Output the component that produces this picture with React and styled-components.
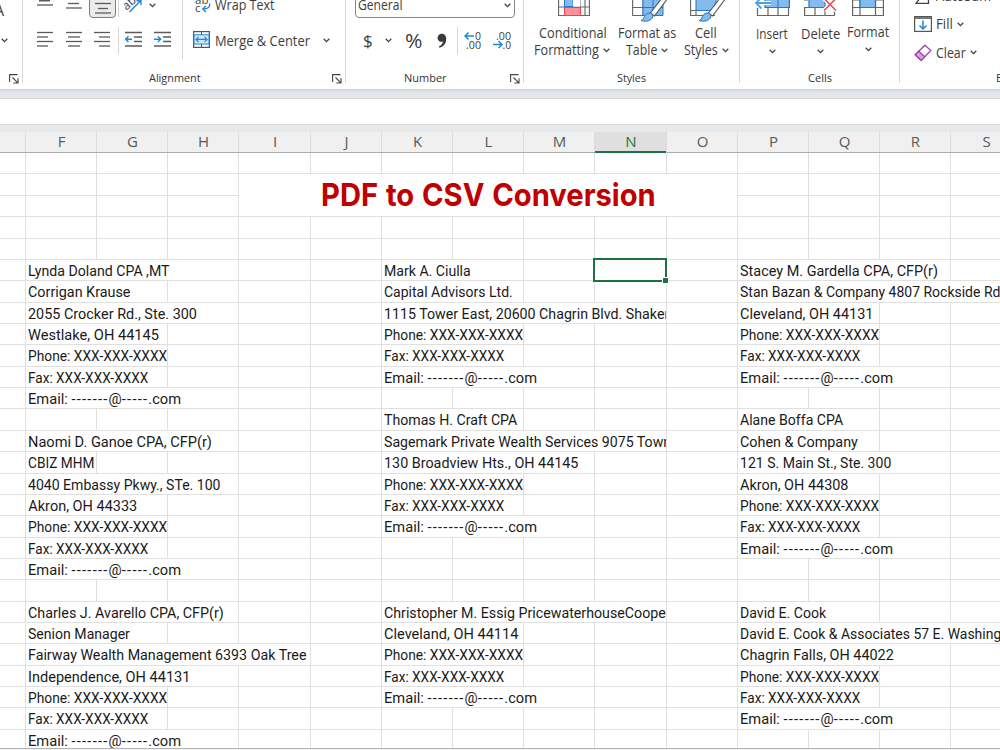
import React, { useLayoutEffect, useRef, useState } from "react";
import styled, { createGlobalStyle } from "styled-components";

const UI = `"Open Sans", "Noto Sans", sans-serif`;
const SHEET = `Roboto, "Liberation Sans", sans-serif`;
const GREEN = "#1e7145";
const LINE = "#e0e0e0";

const Global = createGlobalStyle`
  * { box-sizing: border-box; }
  body { margin: 0; background: #fff; overflow: hidden; }
  svg { display: block; flex: none; }
`;

/* ---------- text of a known width ---------- */

const FitBox = styled.span`
  display: block;
  flex: none;
  width: ${(p) => p.$w}px;
  margin-left: ${(p) => p.$ml || 0}px;
  white-space: pre;
`;
const FitInner = styled.span`
  display: inline-block;
  transform-origin: 0 50%;
`;

function Fit({ w, ml, children }) {
  const ref = useRef(null);
  const [scale, setScale] = useState(1);
  useLayoutEffect(() => {
    setScale(w / ref.current.offsetWidth);
  }, [w]);
  return (
    <FitBox $w={w} $ml={ml}>
      <FitInner ref={ref} style={{ transform: `scaleX(${scale})` }}>
        {children}
      </FitInner>
    </FitBox>
  );
}

/* ---------- ribbon parts ---------- */

const Window = styled.div`
  width: 1000px;
  height: 750px;
  overflow: hidden;
  display: flex;
  flex-direction: column;
  background: #f3f3f3;
`;
const Ribbon = styled.div`
  flex: none;
  height: 89px;
  display: flex;
  overflow: hidden;
  background: #fff;
  font: 14px/18px ${UI};
  color: #3d3d3d;
`;
const Group = styled.div`
  flex: none;
  width: ${(p) => p.$w}px;
  height: 83px;
  display: flex;
  flex-direction: column;
  border-right: ${(p) => (p.$last ? "none" : "1px solid #d8d8d8")};
`;
const Body = styled.div`
  height: 69px;
  flex: none;
  display: flex;
`;
const Stack = styled.div`
  flex: none;
  width: ${(p) => p.$w}px;
`;
const ToolRow = styled.div`
  height: ${(p) => p.$h}px;
  margin-top: ${(p) => p.$mt || 0}px;
  display: flex;
  align-items: ${(p) => p.$align || "center"};
`;
const Footer = styled.div`
  height: 18px;
  flex: none;
  display: flex;
  font-size: 11.5px;
  line-height: 18px;
  color: #333;
`;
const Slot = styled.div`
  flex: none;
  margin-left: ${(p) => p.$ml || 0}px;
  margin-top: ${(p) => p.$mt || 0}px;
`;
const Divider = styled.div`
  flex: none;
  width: 1px;
  height: ${(p) => p.$h}px;
  margin-left: ${(p) => p.$ml || 0}px;
  background: #d4d4d4;
`;
const ActiveTool = styled.div`
  flex: none;
  width: 27px;
  height: 22px;
  margin: -4px 0 0 7px;
  padding: 4px 0 0 5px;
  border: 1px solid #7d7d7d;
  border-radius: 4px;
  background: #ebebeb;
`;
const FormatBox = styled.div`
  width: 160px;
  height: 24px;
  margin: -6px 0 0 9px;
  padding: 0 3px 2px 2px;
  border: 1px solid #868686;
  border-radius: 4px;
  display: flex;
  align-items: center;
  justify-content: space-between;
`;
const Glyph = styled.div`
  flex: none;
  width: ${(p) => p.$w}px;
  margin-left: ${(p) => p.$ml}px;
  font: ${(p) => p.$size}px/24px ${UI};
`;
const BigButton = styled.div`
  flex: none;
  width: ${(p) => p.$w}px;
  display: flex;
  flex-direction: column;
  align-items: center;
`;
const BigIcon = styled.div`
  height: 17px;
  margin-bottom: ${(p) => p.$gap}px;
`;
const Caption = styled.div`
  display: flex;
  align-items: center;
  gap: 4px;
  height: 17.5px;
`;

/* ---------- icons ---------- */

const Chevron = () => (
  <svg width="7" height="5" viewBox="0 0 7 5">
    <path d="M.7 .8 3.5 3.6 6.3 .8" fill="none" stroke="#444" strokeWidth="1.3" />
  </svg>
);
const Launcher = () => (
  <svg width="10" height="10" viewBox="0 0 10 10" fill="none" stroke="#444">
    <path d="M.6 8V.6H8.5M3.5 3.5 8.6 8.6M9 4.3V9H4.3" strokeWidth="1.1" />
  </svg>
);
const Lines = ({ rows, h = 17 }) => (
  <svg width="16" height={h} viewBox={`0 0 16 ${h}`} stroke="#5b5b5b" strokeWidth="1.2">
    {rows.map(([x1, x2, y, w], i) => (
      <path key={i} d={`M${x1} ${y}H${x2}`} strokeWidth={w || 1.3} />
    ))}
  </svg>
);
const Indent = ({ right }) => (
  <svg width="17" height="17" viewBox="0 0 17 17" fill="none">
    <path d="M0 1.5H17M9 6H17M9 10.500H17M0 15H17" stroke="#5b5b5b" strokeWidth="1.3" />
    <path
      d={right ? "M0 8.200H6.500M3.800 5.300 6.700 8.200 3.800 11.100" : "M7 8.200H.8M3.500 5.300 .6 8.200 3.500 11.100"}
      stroke="#1e88d2"
      strokeWidth="1.4"
    />
  </svg>
);
const Orientation = () => (
  <svg width="19" height="13" viewBox="0 0 19 13" fill="none">
    <text x="0" y="8" fontSize="12" fontFamily="Open Sans" fill="#444" transform="rotate(-42 5 6)">ab</text>
    <path d="M5.500 12 16.500 .8M12.500 .8H17V5" stroke="#1e88d2" strokeWidth="1.4" />
  </svg>
);
const WrapIcon = () => (
  <svg width="17" height="14" viewBox="0 0 17 14" fill="none">
    <text x="0" y="3.500" fontSize="11.500" fontFamily="Open Sans" fill="#444">ab</text>
    <text x="0" y="12" fontSize="11.500" fontFamily="Open Sans" fill="#444">c</text>
    <path d="M14.500 3.500C15.500 7 13 9 8 9M10.800 6 7.800 9 10.800 12" stroke="#1e88d2" strokeWidth="1.4" />
  </svg>
);
const MergeIcon = () => (
  <svg width="17" height="17" viewBox="0 0 17 17" fill="none">
    <rect x=".6" y=".6" width="15.800" height="15.800" fill="#fff" stroke="#555" strokeWidth="1.2" />
    <path d="M8.500 0V4M8.500 13V17" stroke="#555" />
    <rect x="1" y="3.800" width="15" height="9.200" fill="#cfe6f7" stroke="#1e88d2" />
    <path d="M3 8.400H14M5.500 5.900 3 8.400 5.500 10.900M11.500 5.900 14 8.400 11.500 10.900" stroke="#1e88d2" strokeWidth="1.3" />
  </svg>
);
const CommaIcon = () => (
  <svg width="10" height="16" viewBox="0 0 10 16">
    <path d="M4.700.8C7.600.8 9.200 3 9.200 6 9.200 10.400 6.600 13.600 2.500 14.800L1.900 13.400C4.400 12.300 5.700 10.700 6 8.600 2.900 9.500.6 7.600.6 4.900.6 2.500 2.300.8 4.700.8Z" fill="#3a3a3a" />
  </svg>
);
const Decimals = ({ increase }) => (
  <svg width="18" height="19" viewBox="0 0 18 19" fill="none">
    <g fontFamily="Open Sans" fontSize="11" fill="#3d3d3d">
      <text x={increase ? 11 : 3} y="8.500" textLength={increase ? 6 : 15} lengthAdjust="spacingAndGlyphs">{increase ? "0" : ".00"}</text>
      <text x={increase ? 2 : 9.500} y="17.500" textLength={increase ? 15 : 8.500} lengthAdjust="spacingAndGlyphs">{increase ? ".00" : ".0"}</text>
    </g>
    <path
      d={increase ? "M10 5H1M4.500 1.500 1 5 4.500 8.500" : "M0 13.500H9M5.500 10 9 13.500 5.500 17"}
      stroke="#1e88d2"
      strokeWidth="1.5"
    />
  </svg>
);
const ConditionalIcon = () => (
  <svg width="32" height="17" viewBox="0 0 32 17" fill="none">
    <path d="M.6 0V15.500H31.400V0M0 7H32M6.500 0V15.500M22.500 0V15.500M27 0V15.500" stroke="#666" strokeWidth="1.1" />
    <rect x="6.500" y="-2" width="8.500" height="8.500" fill="#83bbee" stroke="#2b7cd3" />
    <rect x="15" y="-2" width="7.500" height="8.500" fill="#fff" />
    <rect x="6.500" y="7.500" width="16" height="8" fill="#ff9298" stroke="#e8474c" />
  </svg>
);
const Brush = ({ x }) => (
  <g transform={`translate(${x} 0)`}>
    <path d="M9.500 13 21-2H27L13.500 16Z" fill="#fff" stroke="#555" strokeWidth="1.1" />
    <path d="M0 20.500C4 19.500 2.500 13.500 8 13 11 12.800 13 15.500 11.300 18 9 21.500 3.500 21.800 0 20.500Z" fill="#83bbee" stroke="#2478c4" />
  </g>
);
const TableBrushIcon = () => (
  <svg width="36" height="22" viewBox="0 0 36 22" fill="none">
    <path d="M.6 0V15.500H12M0 7.500H11M11 0V15.500" stroke="#666" strokeWidth="1.1" />
    <path d="M11-1H31V15.500H11Z" fill="#83bbee" stroke="#2478c4" />
    <path d="M11 7.500H31M21 0V15" stroke="#2478c4" />
    <Brush x={9} />
  </svg>
);
const CellBrushIcon = () => (
  <svg width="36" height="22" viewBox="0 0 36 22" fill="none">
    <path d="M.6 0V15.500H25M6 10V15.500M0 10.500H6" stroke="#666" strokeWidth="1.1" />
    <rect x="6" y="-2" width="20" height="12.500" fill="#83bbee" stroke="#2478c4" />
    <Brush x={9} />
  </svg>
);
const InsertIcon = () => (
  <svg width="35" height="17" viewBox="0 0 35 17" fill="none">
    <path d="M2.500 8V15.500H33.500V8M13 8V15.500M23 8V15.500" stroke="#666" strokeWidth="1.200" />
    <path d="M10-1H34.400V7.500H10Z" fill="#83bbee" stroke="#2478c4" strokeWidth="1.200" />
    <path d="M23 0V7" stroke="#2478c4" />
    <path d="M16 3H1" stroke="#fff" strokeWidth="4" />
    <path d="M16 3H1M6.500-2.500 1 3 6.500 8.500" stroke="#4aa3e0" strokeWidth="1.800" />
  </svg>
);
const DeleteIcon = () => (
  <svg width="33" height="17" viewBox="0 0 33 17" fill="none">
    <path d="M.6 7.500V15.500H30.500V11M0 7.500H6M11 8V15.500M21 8V15.500M0 0H4" stroke="#666" strokeWidth="1.200" />
    <path d="M5-1H21V7.500H5Z" fill="#83bbee" stroke="#2478c4" strokeWidth="1.200" />
    <path d="M20-1.500 32 10.500M32-1.500 20 10.500" stroke="#fff" strokeWidth="4" />
    <path d="M20-1.500 32 10.500M32-1.500 20 10.500" stroke="#f0484c" strokeWidth="1.600" />
  </svg>
);
const FormatIcon = () => (
  <svg width="32" height="17" viewBox="0 0 32 17" fill="none">
    <path d="M.6 0V15.500H31.400V0M0 7.500H32M8 0V15.500M23.500 0V15.500M0 0H32" stroke="#666" strokeWidth="1.200" />
    <path d="M8-1H23.500V7.500H8Z" fill="#83bbee" stroke="#2478c4" strokeWidth="1.200" />
  </svg>
);
const FillIcon = () => (
  <svg width="18" height="16" viewBox="0 0 18 16" fill="none">
    <rect x=".6" y=".6" width="16.800" height="14.800" fill="#fff" stroke="#555" strokeWidth="1.200" />
    <path d="M1 2H17" stroke="#777" strokeWidth="2" />
    <path d="M9 4.500V13M5.500 9.500 9 13 12.500 9.500" stroke="#1e88d2" strokeWidth="1.500" />
  </svg>
);
const EraserIcon = () => (
  <svg width="18" height="18" viewBox="0 0 18 18" fill="none" stroke="#a03aa8" strokeWidth="1.200">
    <path d="M11 1.200 16.800 6.500 7.200 16.500 1.200 10.800Z" fill="#fff" />
    <path d="M4.800 7.200 10.800 12.800 7.200 16.500 1.200 10.800Z" fill="#d9a0dd" />
  </svg>
);
const SigmaIcon = () => (
  <svg width="15" height="5" viewBox="0 0 15 5" fill="none">
    <path d="M6-3 1 3.300H13.500V0" stroke="#444" strokeWidth="1.300" />
  </svg>
);

/* ---------- sheet parts ---------- */

const Band = styled.div`
  flex: none;
  height: ${(p) => p.$h}px;
  background: ${(p) => p.$bg};
  border-bottom: ${(p) => (p.$line ? `1px solid ${p.$line}` : "none")};
`;
const COLS = [26, 71, 71, 71, 72, 71, 71, 71, 71, 72, 71, 71, 71, 71, 71];
const rowEdge = (k) => Math.floor(152.6 + 21.36 * k);
const ROWS = Array.from({ length: 28 }, (_, k) => rowEdge(k + 1) - rowEdge(k));

const Headings = styled.div`
  flex: none;
  height: 21px;
  display: grid;
  grid-template-columns: ${COLS.map((c) => c + "px").join(" ")};
  border-bottom: 1px solid #ababab;
  background: #f0f0f0;
  font: 15px/19px ${UI};
`;
const Heading = styled.div`
  height: ${(p) => (p.$on ? 21 : 20)}px;
  padding-left: 1px;
  text-align: center;
  color: ${(p) => (p.$on ? GREEN : "#595959")};
  background: ${(p) => (p.$on ? "#dfdfdf" : "transparent")};
  border-right: 1px solid #dcdcdc;
  box-shadow: ${(p) => (p.$on ? `inset 0 -2px 0 ${GREEN}` : "none")};
`;
const Sheet = styled.div`
  flex: none;
  height: 596px;
  overflow: hidden;
  display: grid;
  grid-template-columns: ${COLS.map((c) => c + "px").join(" ")};
  grid-template-rows: ${ROWS.map((r) => r + "px").join(" ")};
  border-bottom: 1px solid #b4b4b4;
  background: #fff;
  font: 14.5px/21px ${SHEET};
  color: #1a1a1a;
`;
const Cell = styled.div`
  grid-column: ${(p) => p.$c + 1} / span ${(p) => p.$span};
  grid-row: ${(p) => p.$r + 1};
  min-width: 0;
  padding: 1px 0 0 2.300px;
  overflow: ${(p) => (p.$selected ? "visible" : "hidden")};
  position: relative;
  border-right: 1px solid ${LINE};
  border-bottom: 1px solid ${LINE};
`;
const Dashes = styled.span`
  letter-spacing: 1.250px;
`;
const Title = styled.div`
  grid-column: 5 / span 7;
  grid-row: 2 / span 2;
  display: flex;
  justify-content: center;
  border-right: 1px solid ${LINE};
  border-bottom: 1px solid ${LINE};
  font: 700 31.500px/41px Inter, ${SHEET};
  word-spacing: 1px;
  color: #c00000;
`;
const Selection = styled.div`
  position: absolute;
  z-index: 2;
  left: -2px;
  top: -2px;
  width: 74px;
  height: 24px;
  border: 2px solid ${GREEN};
  &::after {
    content: "";
    position: absolute;
    right: -3px;
    bottom: -3px;
    width: 5px;
    height: 5px;
    background: ${GREEN};
    outline: 1px solid #fff;
  }
`;

const phone = ["Phone: XXX-XXX-XXXX", 138.8];
const fax = ["Fax: XXX-XXX-XXXX", 120];
const email = [
  <>
    Email: <Dashes>-------</Dashes>@<Dashes>-----</Dashes>.com
  </>,
  153.5,
];

const BLOCKS = [
  [1, 5, [["Lynda Doland CPA ,MT", 141.5], ["Corrigan Krause", 102], ["2055 Crocker Rd., Ste. 300", 169], ["Westlake, OH 44145", 131], phone, fax, email]],
  [1, 13, [["Naomi D. Ganoe CPA, CFP(r)", 184], ["CBIZ MHM", 66], ["4040 Embassy Pkwy., STe. 100", 193], ["Akron, OH 44333", 109], phone, fax, email]],
  [1, 21, [["Charles J. Avarello CPA, CFP(r)", 195.5], ["Senion Manager", 102], ["Fairway Wealth Management 6393 Oak Tree", 278], ["Independence, OH 44131", 162.5], phone, fax, email]],
  [6, 5, [["Mark A. Ciulla", 86.5], ["Capital Advisors Ltd.", 128.5], ["1115 Tower East, 20600 Chagrin Blvd. Shaker", 285], phone, fax, email]],
  [6, 12, [["Thomas H. Craft CPA", 133.5], ["Sagemark Private Wealth Services 9075 Town", 287.5], ["130 Broadview Hts., OH 44145", 194], phone, fax, email]],
  [6, 21, [["Christopher M. Essig PricewaterhouseCoope", 281.5], ["Cleveland, OH 44114", 134.5], phone, fax, email]],
  [11, 5, [["Stacey M. Gardella CPA, CFP(r)", 198], ["Stan Bazan & Company 4807 Rockside Rd", 260.5], ["Cleveland, OH 44131", 133.5], phone, fax, email]],
  [11, 12, [["Alane Boffa CPA", 103], ["Cohen & Company", 118], ["121 S. Main St., Ste. 300", 151], ["Akron, OH 44308", 108.5], phone, fax, email]],
  [11, 21, [["David E. Cook", 86.5], ["David E. Cook & Associates 57 E. Washing", 261], ["Chagrin Falls, OH 44022", 154], phone, fax, email]],
];

function buildCells() {
  const texts = {};
  BLOCKS.forEach(([c, r, lines]) =>
    lines.forEach(([text, w], i) => {
      let span = 0;
      let room = 0;
      while (room < w + 2.5 && span < 4) room += COLS[c + span++];
      texts[`${r + i}-${c}`] = { text, w, span };
    })
  );
  const cells = [];
  for (let r = 0; r < 28; r++) {
    for (let c = 0; c < COLS.length; ) {
      if ((r === 1 || r === 2) && c >= 4 && c <= 10) {
        c++;
        continue;
      }
      const t = texts[`${r}-${c}`] || { span: 1 };
      cells.push({ r, c, ...t });
      c += t.span;
    }
  }
  return cells;
}
const CELLS = buildCells();

const LETTERS = ["", ..."FGHIJKLMNOPQRS"];

export default function App() {
  return (
    <Window>
      <Global />
      <Ribbon>
        <Group $w={23}>
          <Body>
            <Stack $w={22}>
              <ToolRow $h={20}><Glyph $w={8} $ml={-6} $size={16}>A</Glyph></ToolRow>
              <ToolRow $h={27} $mt={7}><Slot $ml={1}><Chevron /></Slot></ToolRow>
            </Stack>
          </Body>
          <Footer><Slot $ml={9} $mt={5}><Launcher /></Slot></Footer>
        </Group>

        <Group $w={323}>
          <Body>
            <Stack $w={159}>
              <ToolRow $h={20} $align="flex-start">
                <Slot $ml={14}><Lines rows={[[2, 13, 0.5, 2], [0, 16, 5]]} /></Slot>
                <Slot $ml={13}><Lines rows={[[2, 13, 3.500], [0, 16, 8]]} /></Slot>
                <ActiveTool><Lines rows={[[0, 16, 2.500], [3, 13, 7.500], [0, 16, 12]]} /></ActiveTool>
                <Divider $h={17} $ml={2} />
                <Slot $ml={5}><Orientation /></Slot>
                <Slot $ml={6} $mt={3}><Chevron /></Slot>
              </ToolRow>
              <ToolRow $h={27} $mt={7}>
                <Slot $ml={14} $mt={-2}><Lines rows={[[0, 16, 1.500], [0, 11, 6], [0, 16, 10.500], [0, 11, 15]]} /></Slot>
                <Slot $ml={13} $mt={-2}><Lines rows={[[0, 16, 1.500], [2, 14, 6], [0, 16, 10.500], [2, 14, 15]]} /></Slot>
                <Slot $ml={12} $mt={-2}><Lines rows={[[0, 16, 1.500], [5, 16, 6], [0, 16, 10.500], [5, 16, 15]]} /></Slot>
                <Divider $h={27} $ml={8} />
                <Slot $ml={6} $mt={-2}><Indent /></Slot>
                <Slot $ml={12} $mt={-2}><Indent right /></Slot>
              </ToolRow>
            </Stack>
            <Divider $h={59} />
            <Stack $w={160}>
              <ToolRow $h={20} $align="flex-start">
                <Slot $ml={12}><WrapIcon /></Slot>
                <Slot $mt={-4}><Fit w={60} ml={3}>Wrap Text</Fit></Slot>
              </ToolRow>
              <ToolRow $h={27} $mt={7}>
                <Slot $ml={10} $mt={-2}><MergeIcon /></Slot>
                <Fit w={95} ml={5}>Merge &amp; Center</Fit>
                <Slot $ml={13}><Chevron /></Slot>
              </ToolRow>
            </Stack>
          </Body>
          <Footer>
            <Fit w={52} ml={126}>Alignment</Fit>
            <Slot $ml={131} $mt={5}><Launcher /></Slot>
          </Footer>
        </Group>

        <Group $w={178}>
          <Body>
            <Stack $w={177}>
              <ToolRow $h={20} $align="flex-start">
                <FormatBox><Fit w={45}>General</Fit><Chevron /></FormatBox>
              </ToolRow>
              <ToolRow $h={27} $mt={7}>
                <Glyph $w={10} $ml={17} $size={17}>$</Glyph>
                <Slot $ml={12}><Chevron /></Slot>
                <Glyph $w={18} $ml={13} $size={20}><Fit w={18}>%</Fit></Glyph>
                <Slot $ml={14}><CommaIcon /></Slot>
                <Divider $h={27} $ml={10} />
                <Slot $ml={6}><Decimals increase /></Slot>
                <Slot $ml={11}><Decimals /></Slot>
              </ToolRow>
            </Stack>
          </Body>
          <Footer>
            <Fit w={43} ml={58}>Number</Fit>
            <Slot $ml={63} $mt={5}><Launcher /></Slot>
          </Footer>
        </Group>

        <Group $w={216}>
          <Body>
            <BigButton $w={93}>
              <BigIcon $gap={7}><Slot $ml={6}><ConditionalIcon /></Slot></BigIcon>
              <Caption><Slot $ml={4}><Fit w={68}>Conditional</Fit></Slot></Caption>
              <Caption><Slot $ml={3}><Fit w={65}>Formatting</Fit></Slot><Chevron /></Caption>
            </BigButton>
            <BigButton $w={60}>
              <BigIcon $gap={7}><Slot $ml={6}><TableBrushIcon /></Slot></BigIcon>
              <Caption><Fit w={58}>Format as</Fit></Caption>
              <Caption><Fit w={31}>Table</Fit><Chevron /></Caption>
            </BigButton>
            <BigButton $w={58}>
              <BigIcon $gap={7}><Slot $ml={4}><CellBrushIcon /></Slot></BigIcon>
              <Caption><Fit w={22}>Cell</Fit></Caption>
              <Caption><Fit w={34}>Styles</Fit><Chevron /></Caption>
            </BigButton>
          </Body>
          <Footer><Fit w={29} ml={93}>Styles</Fit></Footer>
        </Group>

        <Group $w={160}>
          <Body>
            <BigButton $w={64}>
              <BigIcon $gap={8}><InsertIcon /></BigIcon>
              <Caption><Fit w={32}>Insert</Fit></Caption>
              <Caption><Chevron /></Caption>
            </BigButton>
            <BigButton $w={32}>
              <BigIcon $gap={8}><DeleteIcon /></BigIcon>
              <Caption><Fit w={39}>Delete</Fit></Caption>
              <Caption><Chevron /></Caption>
            </BigButton>
            <BigButton $w={64}>
              <BigIcon $gap={6}><FormatIcon /></BigIcon>
              <Caption><Fit w={42}>Format</Fit></Caption>
              <Caption><Chevron /></Caption>
            </BigButton>
          </Body>
          <Footer><Fit w={24} ml={68}>Cells</Fit></Footer>
        </Group>

        <Group $w={120} $last>
          <Body>
            <Stack $w={120}>
              <ToolRow $h={10} $align="flex-start">
                <Slot $ml={15}><SigmaIcon /></Slot>
                <Slot $mt={-13}><Fit w={55} ml={6}>AutoSum</Fit></Slot>
              </ToolRow>
              <ToolRow $h={28}>
                <Slot $ml={14}><FillIcon /></Slot>
                <Fit w={17} ml={4}>Fill</Fit>
                <Slot $ml={4}><Chevron /></Slot>
              </ToolRow>
              <ToolRow $h={29}>
                <Slot $ml={14}><EraserIcon /></Slot>
                <Fit w={30} ml={4}>Clear</Fit>
                <Slot $ml={4}><Chevron /></Slot>
              </ToolRow>
            </Stack>
          </Body>
          <Footer><Fit w={36} ml={96}>Editing</Fit></Footer>
        </Group>
      </Ribbon>

      <Band $h={10} $bg="linear-gradient(#cfd1d4, #e1e4e8 35%, #e6e9ec)" $line="#d5d7d9" />
      <Band $h={26} $bg="#fff" $line="#d5d7d9" />
      <Band $h={7} $bg="#e6eaed" />

      <Headings>
        {LETTERS.map((l, i) => (
          <Heading key={i} $on={l === "N"}>{l}</Heading>
        ))}
      </Headings>

      <Sheet>
        {CELLS.map(({ r, c, span, text, w }) => {
          const selected = r === 5 && c === 9;
          return (
            <Cell key={`${r}-${c}`} $r={r} $c={c} $span={span} $selected={selected}>
              {text && <Fit w={w}>{text}</Fit>}
              {selected && <Selection />}
            </Cell>
          );
        })}
        <Title><Fit w={335}>PDF to CSV Conversion</Fit></Title>
      </Sheet>
    </Window>
  );
}
